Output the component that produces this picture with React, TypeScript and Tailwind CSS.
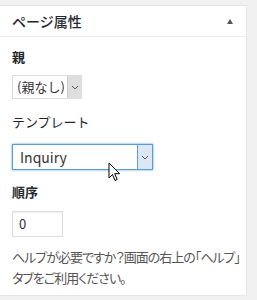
import React from "react";

const Chevron = () => (
  <svg width="8" height="5" viewBox="0 0 8 5" fill="none">
    <path d="M1 1l3 3 3-3" stroke="#555" strokeWidth="1" />
  </svg>
);

const Cursor = () => (
  <svg width="13" height="20" viewBox="0 0 13 20">
    <path
      d="M1 1v15l3.5-3.5 2.5 6 2.2-1-2.5-5.8h5z"
      fill="#fff"
      stroke="#000"
      strokeWidth="1"
      strokeLinejoin="round"
    />
  </svg>
);

export default function App() {
  return (
    <div
      className="w-[257px] h-[300px] bg-[#f1f1f1] pt-[5px] overflow-hidden"
      style={{ fontFamily: '"Noto Sans CJK JP", "Noto Sans", sans-serif' }}
    >
      <div className="w-[247px] h-[291px] bg-white border border-[#e5e5e5] border-l-0">
        <div className="h-[31px] flex items-center justify-between pl-3 pr-[13px] border-b border-[#eeeeee]">
          <span className="text-[14px] font-medium text-[#23282d] leading-none">
            ページ属性
          </span>
          <span className="w-0 h-0 border-l-[3px] border-r-[3px] border-b-[5px] border-l-transparent border-r-transparent border-b-[#555]" />
        </div>
        <div className="px-3 pt-[10px]">
          <div className="text-[13px] font-bold text-[#23282d] leading-[20px]">親</div>
          <div className="mt-[8px] w-[70px] h-[24px] flex border border-[#ddd] bg-white">
            <span className="flex-1 pl-[4px] text-[13px] leading-[22px] text-[#333]">(親なし)</span>
            <span className="w-[14px] bg-[#dedede] border-l border-[#ccc] flex items-center justify-center">
              <Chevron />
            </span>
          </div>
          <div className="mt-[13px] text-[13px] text-[#23282d] leading-[20px]">テンプレート</div>
          <div className="relative mt-[12px] w-[141px] h-[26px] flex border border-[#5b9dd9] shadow-[0_0_2px_rgba(30,140,190,0.8)] bg-white">
            <span className="flex-1 pl-[7px] text-[14px] leading-[24px] text-[#333]">Inquiry</span>
            <span className="w-[15px] bg-[#dbe7f3] border-l border-[#5b9dd9] flex items-center justify-center">
              <Chevron />
            </span>
            <span className="absolute left-[95px] top-[17px]">
              <Cursor />
            </span>
          </div>
          <div className="mt-[12px] text-[13px] font-bold text-[#23282d] leading-[20px]">順序</div>
          <div className="mt-[9px] w-[51px] h-[26px] border border-[#ddd] shadow-[inset_0_1px_2px_rgba(0,0,0,0.07)] pl-[6px] text-[13px] leading-[24px] text-[#333]">
            0
          </div>
          <p className="mt-[9px] text-[13px] leading-[21px] text-[#555] whitespace-nowrap [font-feature-settings:'palt'] tracking-[-1px]">
            ヘルプが必要ですか？画面の右上の「ヘルプ」
            <br />
            タブをご利用ください。
          </p>
        </div>
      </div>
    </div>
  );
}
